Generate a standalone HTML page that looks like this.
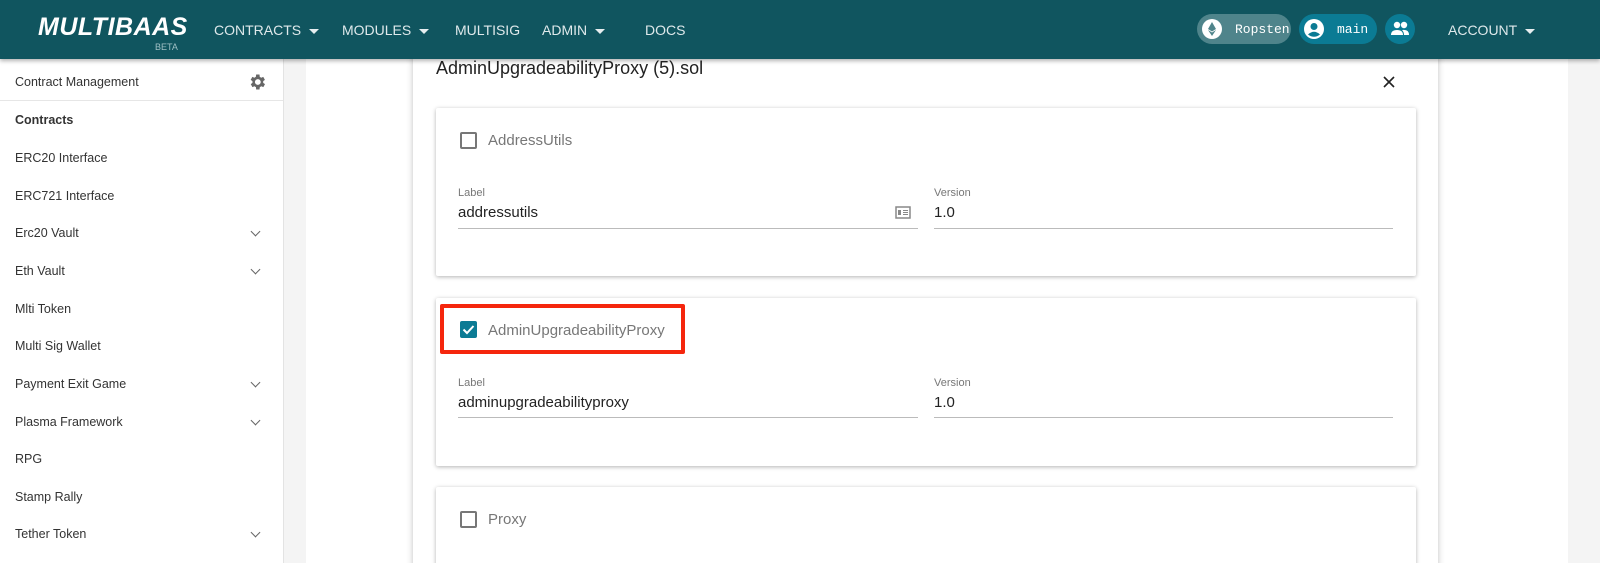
<!DOCTYPE html>
<html><head><meta charset="utf-8"><style>
*{margin:0;padding:0;box-sizing:border-box}
html,body{width:1600px;height:563px;overflow:hidden}
body{font-family:"Liberation Sans",sans-serif;background:#f4f4f4;position:relative}
.hdr{position:absolute;left:0;top:0;width:1600px;height:59px;background:#10555f;box-shadow:0 2px 4px rgba(0,0,0,.3);z-index:5;color:#e6eef0}
.logo{position:absolute;left:38px;top:13px;font-size:25px;font-weight:bold;font-style:italic;color:#fff;letter-spacing:.5px}
.beta{position:absolute;left:155px;top:42px;font-size:9px;color:#9fc0c5}
.nav{position:absolute;top:22px;font-size:14px;color:#dfe9eb}
.car{display:inline-block;width:0;height:0;border-left:5px solid transparent;border-right:5px solid transparent;border-top:5px solid #e6eef0;margin-left:8px;vertical-align:middle}
.pill{position:absolute;top:14px;height:30px;border-radius:15px;color:#fff;font-family:"Liberation Mono",monospace;font-size:13px}
.side{position:absolute;left:0;top:59px;width:284px;height:504px;background:#fff;border-right:1px solid #e3e3e3}
.si{position:absolute;left:15px;font-size:12.5px;color:#333}
.chev{position:absolute;left:252px;width:7px;height:7px;border-right:1.5px solid #666;border-bottom:1.5px solid #666;transform:rotate(45deg)}
.main{position:absolute;left:306px;top:59px;width:1262px;height:504px;background:#fff}
.dlg{position:absolute;left:413px;top:40px;width:1025px;height:540px;background:#fff;box-shadow:0 0 6px rgba(0,0,0,.25)}
.card{position:absolute;left:436px;width:980px;background:#fff;box-shadow:0 1px 4px rgba(0,0,0,.3);border-radius:2px}
.cb{position:absolute;width:17px;height:17px;border:2px solid #777;border-radius:2px}
.ct{position:absolute;font-size:15px;color:#777}
.lab{position:absolute;font-size:11px;color:#777}
.val{position:absolute;font-size:15px;color:#222}
.ln{position:absolute;height:1px;background:#bbb}
</style></head><body>
<div class="hdr">
<div class="logo">MULTIBAAS</div><div class="beta">BETA</div>
<div class="nav" style="left:214px">CONTRACTS<span class="car"></span></div>
<div class="nav" style="left:342px">MODULES<span class="car"></span></div>
<div class="nav" style="left:455px">MULTISIG</div>
<div class="nav" style="left:542px">ADMIN<span class="car"></span></div>
<div class="nav" style="left:645px">DOCS</div>
<div class="pill" style="left:1197px;width:94px;background:#4f848b"><svg style="position:absolute;left:5px;top:5px" width="20" height="20"><circle cx="10" cy="10" r="10" fill="#fff"/><path d="M10 3L6 10L10 12.5L14 10Z M6 11L10 17L14 11L10 13.5Z" fill="#4f848b"/></svg><span style="position:absolute;left:38px;top:8px">Ropsten</span></div>
<div class="pill" style="left:1299px;width:78px;background:#0b7b94"><svg style="position:absolute;left:5px;top:5px" width="20" height="20"><circle cx="10" cy="10" r="10" fill="#fff"/><circle cx="10" cy="7.5" r="3.5" fill="#0b7b94"/><path d="M4 15.5Q10 10 16 15.5Q10 20 4 15.5Z" fill="#0b7b94"/></svg><span style="position:absolute;left:38px;top:8px">main</span></div>
<div class="pill" style="left:1385px;width:30px;background:#0b7b94"><svg style="position:absolute;left:5px;top:6px" width="20" height="18"><circle cx="7" cy="5" r="3.2" fill="#fff"/><circle cx="14" cy="5" r="3.2" fill="#fff"/><path d="M1 15Q1 10 7 10Q13 10 13 15Z M12 10Q19 9 19 15H14Q14 12 12 10Z" fill="#fff"/></svg></div>
<div class="nav" style="left:1448px">ACCOUNT<span class="car"></span></div>
</div>
<div class="side">
<div class="si" style="top:16px">Contract Management</div>
<svg style="position:absolute;left:247px;top:13px" width="20" height="20" viewBox="0 0 24 24"><path fill="#666" d="M19.4 13a7.5 7.5 0 000-2l2.1-1.6-2-3.5-2.5 1a7.3 7.3 0 00-1.7-1L15 3h-4l-.4 2.9a7.3 7.3 0 00-1.7 1l-2.5-1-2 3.5L6.6 11a7.5 7.5 0 000 2l-2.1 1.6 2 3.5 2.5-1a7.3 7.3 0 001.7 1L11 21h4l.4-2.9a7.3 7.3 0 001.7-1l2.5 1 2-3.5zM13 15.5A3.5 3.5 0 1113 8.5a3.5 3.5 0 010 7z"/></svg>
<div style="position:absolute;left:0;top:41px;width:283px;height:1px;background:#e6e6e6"></div>
<div class="si" style="top:54px;font-weight:bold">Contracts</div>
<div class="si" style="top:92px">ERC20 Interface</div>
<div class="si" style="top:130px">ERC721 Interface</div>
<div class="si" style="top:167px">Erc20 Vault</div><div class="chev" style="top:169px"></div>
<div class="si" style="top:205px">Eth Vault</div><div class="chev" style="top:207px"></div>
<div class="si" style="top:243px">Mlti Token</div>
<div class="si" style="top:280px">Multi Sig Wallet</div>
<div class="si" style="top:318px">Payment Exit Game</div><div class="chev" style="top:320px"></div>
<div class="si" style="top:356px">Plasma Framework</div><div class="chev" style="top:358px"></div>
<div class="si" style="top:393px">RPG</div>
<div class="si" style="top:431px">Stamp Rally</div>
<div class="si" style="top:468px">Tether Token</div><div class="chev" style="top:470px"></div>
</div>
<div class="main"></div>
<div class="dlg"></div>
<div style="position:absolute;left:436px;top:58px;font-size:18px;color:#222">AdminUpgradeabilityProxy (5).sol</div>
<svg style="position:absolute;left:1383px;top:76px" width="12" height="12"><path d="M1 1L11 11M11 1L1 11" stroke="#222" stroke-width="1.6"/></svg>
<div class="card" style="top:108px;height:168px"></div>
<div class="cb" style="left:460px;top:132px"></div><div class="ct" style="left:488px;top:132px">AddressUtils</div>
<div class="lab" style="left:458px;top:187px">Label</div><div class="val" style="left:458px;top:204px">addressutils</div>
<svg style="position:absolute;left:895px;top:206px" width="16" height="13"><rect x="1" y="1" width="14" height="11" fill="none" stroke="#888" stroke-width="1.5"/><rect x="3" y="4" width="3" height="5" fill="#888"/><path d="M8 4.5h5M8 6.5h5M8 8.5h5" stroke="#888"/></svg>
<div class="ln" style="left:458px;top:228px;width:460px"></div>
<div class="lab" style="left:934px;top:187px">Version</div><div class="val" style="left:934px;top:204px">1.0</div>
<div class="ln" style="left:934px;top:228px;width:459px"></div>
<div class="card" style="top:298px;height:168px"></div>
<div style="position:absolute;left:440px;top:304px;width:245px;height:50px;border:4px solid #f5260d;border-radius:2px"></div>
<div style="position:absolute;left:460px;top:321px;width:17px;height:17px;background:#0b7b94;border-radius:2px"><svg width="17" height="17"><path d="M3.5 8.5l3.5 3.5 6.5-7" stroke="#fff" stroke-width="2" fill="none"/></svg></div>
<div class="ct" style="left:488px;top:322px">AdminUpgradeabilityProxy</div>
<div class="lab" style="left:458px;top:377px">Label</div><div class="val" style="left:458px;top:394px">adminupgradeabilityproxy</div>
<div class="ln" style="left:458px;top:417px;width:460px"></div>
<div class="lab" style="left:934px;top:377px">Version</div><div class="val" style="left:934px;top:394px">1.0</div>
<div class="ln" style="left:934px;top:417px;width:459px"></div>
<div class="card" style="top:487px;height:100px"></div>
<div class="cb" style="left:460px;top:511px"></div><div class="ct" style="left:488px;top:511px">Proxy</div>
</body></html>
